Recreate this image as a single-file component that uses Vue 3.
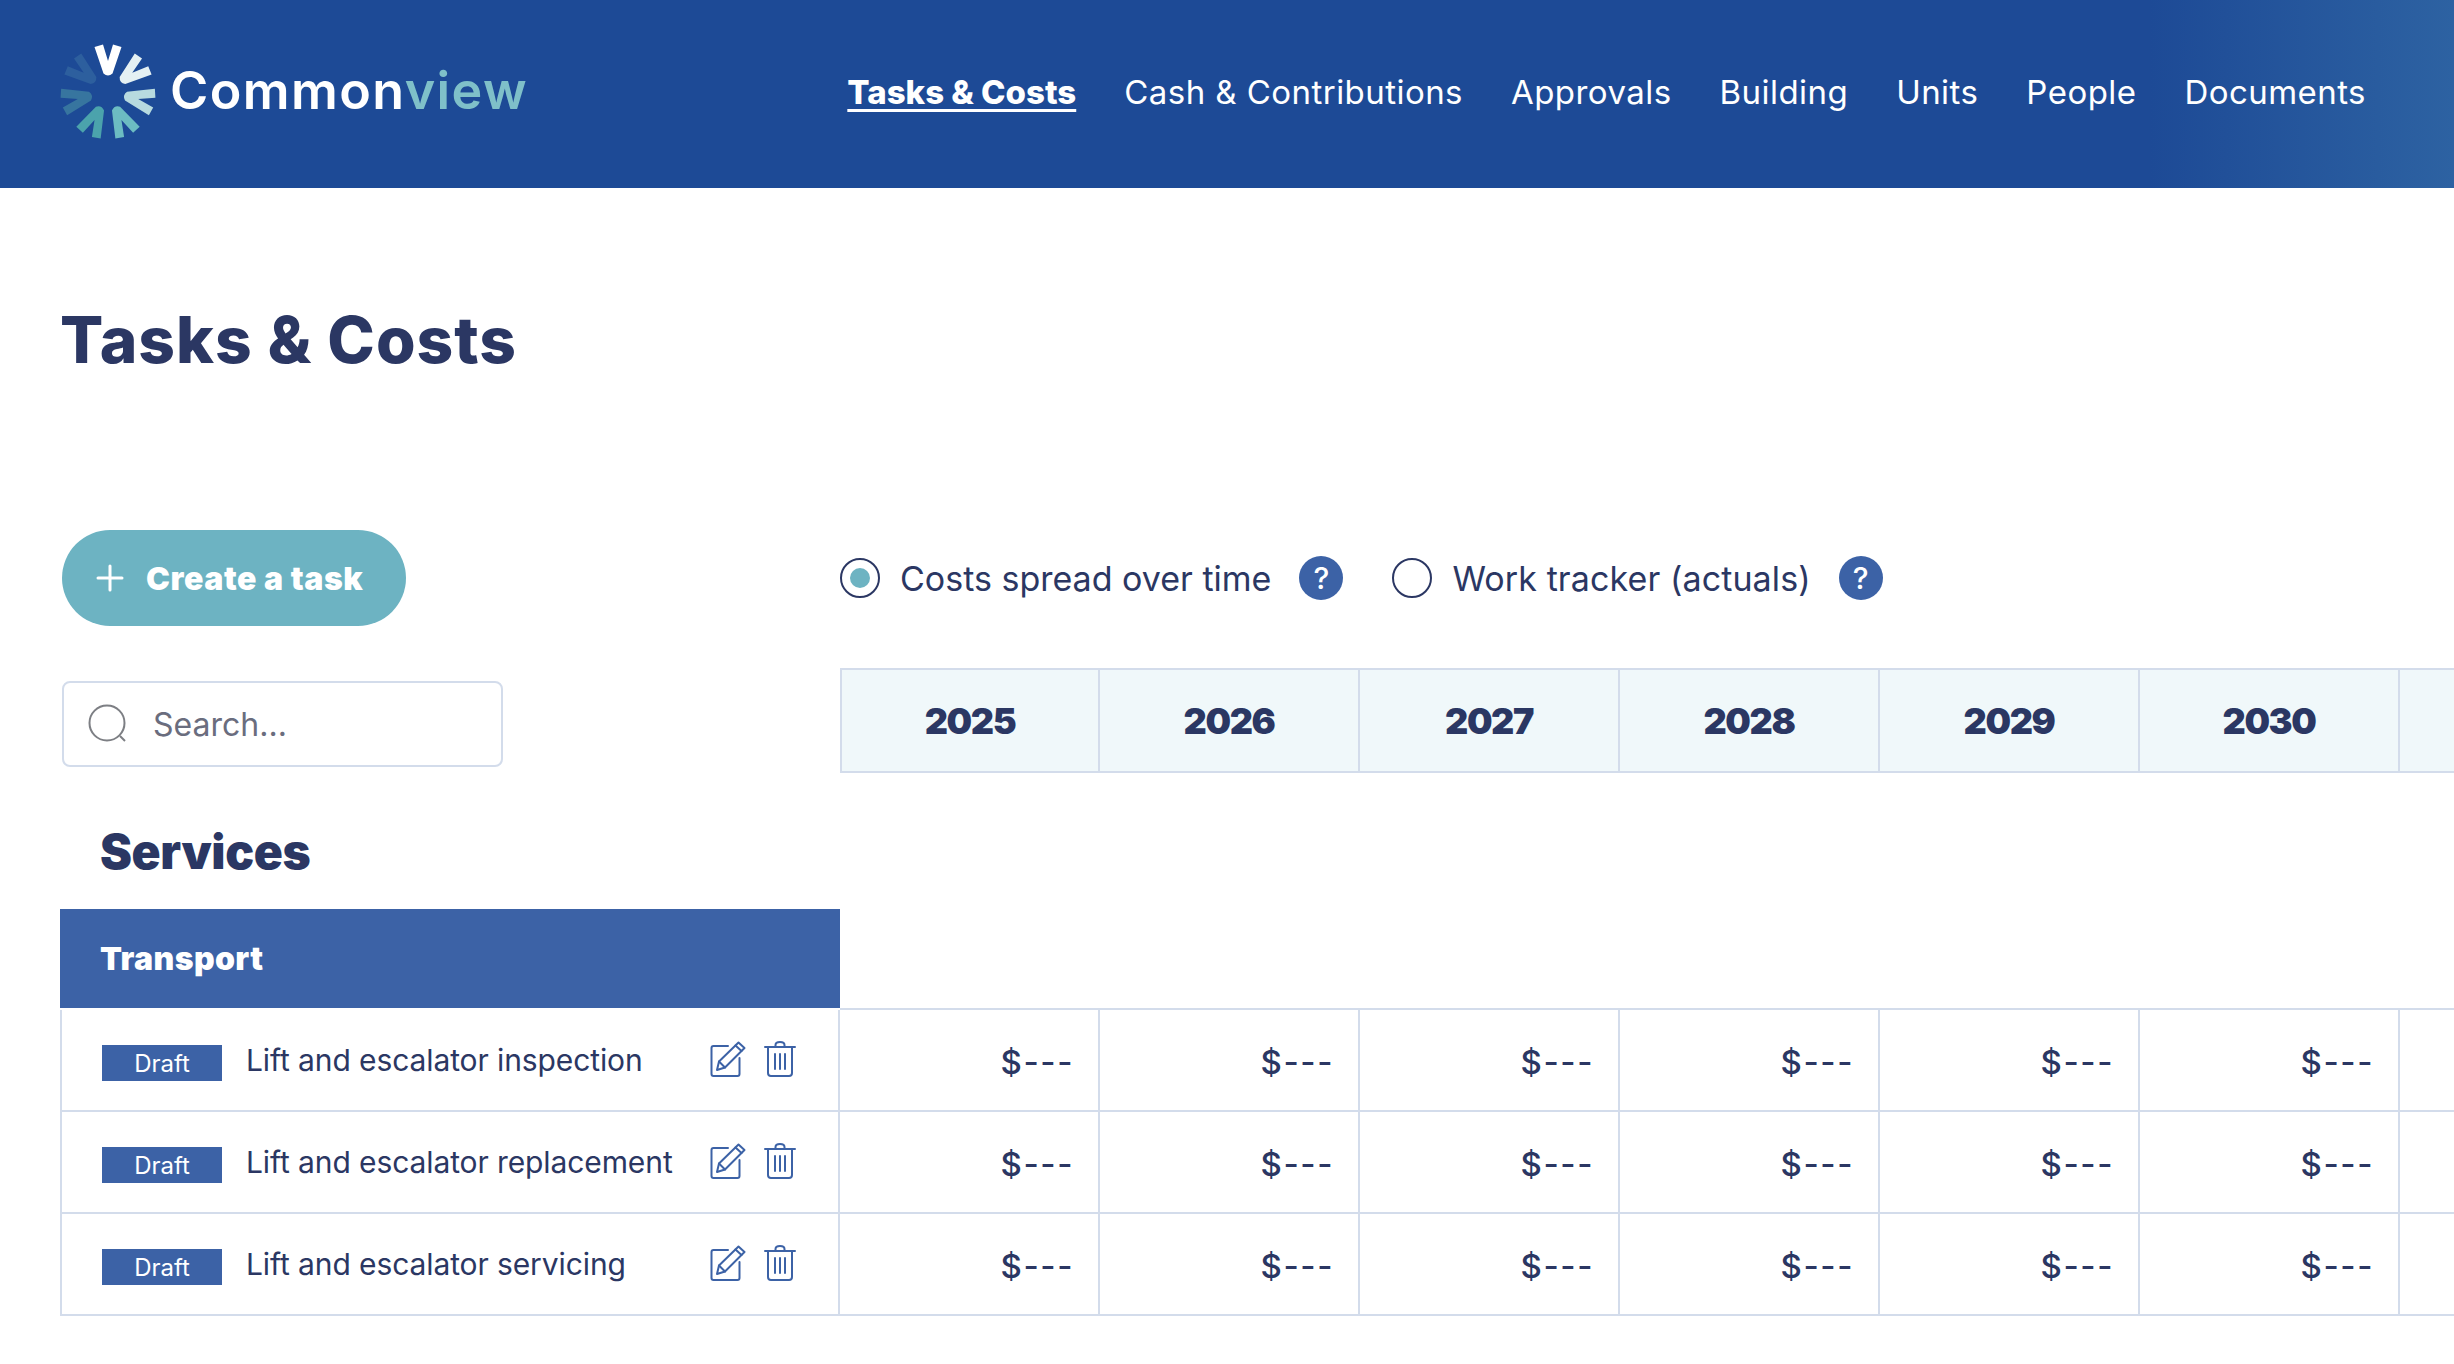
<script setup>
const navItems = ["Tasks & Costs", "Cash & Contributions", "Approvals", "Building", "Units", "People", "Documents"]
const years = [2025, 2026, 2027, 2028, 2029, 2030]
const tasks = ["Lift and escalator inspection", "Lift and escalator replacement", "Lift and escalator servicing"]
const petals = ["#ffffff", "#e4f0f3", "#b7dadf", "#6cbcc2", "#4ba3ac", "#37759f", "#2d5f9e"]
</script>

<template>
  <div class="page">
    <header class="topbar">
      <div class="brand">
        <svg class="logo" viewBox="-48 -48 96 96" width="96" height="96">
          <path
            v-for="(color, i) in petals"
            :key="i"
            :fill="color"
            :transform="`rotate(${(i * 360) / 7})`"
            d="M-13.5 -45 L-5 -47.5 L0 -31 L5 -47.5 L13.5 -45 L4.5 -18.5 Q0 -14.5 -4.5 -18.5 Z"
          />
        </svg>
        <span class="wordmark">Common<span class="wordmark-accent">view</span></span>
      </div>
      <nav class="nav">
        <a v-for="(item, i) in navItems" :key="item" class="nav-link" :class="{ active: i === 0 }">{{ item }}</a>
      </nav>
    </header>

    <main class="content">
      <h1 class="title">Tasks &amp; Costs</h1>

      <div class="row controls">
        <div class="side">
          <button class="create-btn">
            <svg width="28" height="28" viewBox="0 0 28 28">
              <path d="M14 2V26M2 14H26" stroke="#fff" stroke-width="3" stroke-linecap="round" />
            </svg>
            Create a task
          </button>
        </div>
        <div class="view-options">
          <label class="option">
            <span class="radio checked"></span>
            <span>Costs spread over time</span>
          </label>
          <span class="help">?</span>
          <label class="option second">
            <span class="radio"></span>
            <span>Work tracker (actuals)</span>
          </label>
          <span class="help">?</span>
        </div>
      </div>

      <div class="row years-row">
        <div class="side">
          <div class="search">
            <svg width="42" height="40" viewBox="0 0 42 40" fill="none" stroke="#7d7f84" stroke-width="2">
              <circle cx="19" cy="19" r="17.5" />
              <path d="M32 32L37 37" />
            </svg>
            <span>Search...</span>
          </div>
        </div>
        <div class="cells">
          <div v-for="year in years" :key="year" class="year">{{ year }}</div>
          <div class="year"></div>
        </div>
      </div>

      <h2 class="section-title">Services</h2>

      <div class="row group-row">
        <div class="group">Transport</div>
        <div class="group-rest"></div>
      </div>

      <div v-for="task in tasks" :key="task" class="row task-row">
        <div class="task">
          <span class="badge">Draft</span>
          <span class="task-name">{{ task }}</span>
          <svg class="edit" width="36" height="36" viewBox="0 0 36 36" fill="none" stroke="#3c62a6" stroke-width="2" stroke-linejoin="round" stroke-linecap="round">
            <path d="M18 5H3.5Q1.5 5 1.5 7V33Q1.5 35 3.5 35H27.5Q29.5 35 29.5 33V17" />
            <path d="M28.5 1.5L34.5 7L15 26.5L7 29L9 20.5Z" />
            <path d="M9 20.5L15 26.5M25.5 4.5L31.5 10" />
          </svg>
          <svg class="trash" width="32" height="36" viewBox="0 0 32 36" fill="none" stroke="#3c62a6" stroke-width="2" stroke-linejoin="round" stroke-linecap="round">
            <path d="M1 6H31" />
            <path d="M11.5 6V4Q11.5 1 16 1Q20.5 1 20.5 4V6" />
            <path d="M4 6V32Q4 35 7 35H25Q28 35 28 32V6" />
            <path d="M11 13V28M16 13V28M21 13V28" />
          </svg>
        </div>
        <div class="cells">
          <div v-for="year in years" :key="year" class="amount">$---</div>
          <div class="amount"></div>
        </div>
      </div>
    </main>
  </div>
</template>

<style scoped>
.page {
  width: 2454px;
  height: 1364px;
  overflow: hidden;
  font-family: Inter, "Liberation Sans", sans-serif;
  color: #2b3763;
  background: #fff;
}

.topbar {
  height: 188px;
  box-sizing: border-box;
  display: flex;
  align-items: center;
  justify-content: space-between;
  padding: 0 88px 0 60px;
  background: linear-gradient(90deg, #1d4a96 0, #1d4a96 2150px, #2d62a2 100%);
}

.brand {
  display: flex;
  align-items: center;
  gap: 14px;
  margin-bottom: 4px;
}

.logo {
  display: block;
}

.wordmark {
  margin-bottom: 4px;
  font-size: 52px;
  font-weight: 600;
  letter-spacing: 1.4px;
  color: #fff;
}

.wordmark-accent {
  color: #7fc0c9;
}

.nav {
  display: flex;
  gap: 48px;
  margin-bottom: 4px;
  font-size: 33px;
  letter-spacing: 0.45px;
  color: #fff;
}

.nav-link.active {
  font-weight: 800;
  letter-spacing: 0;
  text-decoration: underline;
  text-underline-offset: 5px;
}

.content {
  padding-left: 60px;
}

.title {
  margin: 0;
  padding-top: 112px;
  height: 230px;
  box-sizing: content-box;
  font-size: 64px;
  line-height: 80px;
  font-weight: 800;
  letter-spacing: 1px;
}

.row {
  display: flex;
}

.side {
  width: 780px;
  flex: none;
}

.controls {
  height: 138px;
}

.create-btn {
  width: 344px;
  height: 96px;
  margin-left: 2px;
  border: 0;
  border-radius: 48px;
  background: #6db3c2;
  color: #fff;
  font: 900 32px Inter, sans-serif;
  letter-spacing: 0.6px;
  display: flex;
  align-items: center;
  gap: 22px;
  padding: 0 0 0 34px;
}

.view-options {
  display: flex;
  align-items: center;
  height: 96px;
  font-size: 34px;
}

.option {
  display: flex;
  align-items: center;
  gap: 20px;
}

.option.second {
  margin-left: 49px;
  letter-spacing: 0.1px;
}

.radio {
  width: 40px;
  height: 40px;
  box-sizing: border-box;
  border: 2px solid #2b3763;
  border-radius: 50%;
  display: flex;
  align-items: center;
  justify-content: center;
}

.radio.checked::after {
  content: "";
  width: 20px;
  height: 20px;
  border-radius: 50%;
  background: #6db3c2;
}

.help {
  width: 44px;
  height: 44px;
  margin-left: 28px;
  border-radius: 50%;
  background: #3c62a6;
  color: #fff;
  font-size: 30px;
  font-weight: 500;
  display: flex;
  align-items: center;
  justify-content: center;
}

.search {
  width: 441px;
  height: 86px;
  margin: 13px 0 0 2px;
  box-sizing: border-box;
  border: 2px solid #d3dceb;
  border-radius: 8px;
  display: flex;
  align-items: center;
  gap: 23px;
  padding-left: 24px;
  font-size: 32px;
  color: #6a6d7e;
}

.cells {
  flex: 1;
  display: flex;
  min-width: 0;
}

.years-row {
  height: 105px;
}

.year {
  flex: none;
  width: 260px;
  box-sizing: border-box;
  border: 2px solid #d3dceb;
  border-left-width: 0;
  background: #f0f8fa;
  font-size: 36px;
  font-weight: 900;
  letter-spacing: -1.4px;
  display: flex;
  align-items: center;
  justify-content: center;
}

.year:first-child {
  border-left-width: 2px;
}

.section-title {
  margin: 0;
  height: 136px;
  box-sizing: border-box;
  padding: 48px 0 0 40px;
  font-size: 48px;
  line-height: 62px;
  font-weight: 900;
  letter-spacing: -0.4px;
}

.group-row {
  height: 101px;
}

.group {
  width: 780px;
  flex: none;
  height: 99px;
  box-sizing: border-box;
  background: #3c62a6;
  color: #fff;
  font-size: 32px;
  font-weight: 900;
  letter-spacing: 0.4px;
  display: flex;
  align-items: center;
  padding-left: 40px;
}

.group-rest {
  flex: 1;
  border-bottom: 2px solid #d3dceb;
}

.task-row {
  height: 102px;
}

.task {
  width: 780px;
  flex: none;
  box-sizing: border-box;
  border: 2px solid #d3dceb;
  border-top: 0;
  display: flex;
  align-items: center;
  padding-left: 40px;
  position: relative;
}

.badge {
  width: 120px;
  height: 36px;
  margin-top: 6px;
  background: #3c62a6;
  color: #fff;
  font-size: 24px;
  display: flex;
  align-items: center;
  justify-content: center;
}

.task-name {
  margin-left: 24px;
  margin-bottom: 1px;
  font-size: 30px;
  letter-spacing: -0.1px;
  white-space: nowrap;
}

.edit {
  position: absolute;
  left: 648px;
  top: 31px;
}

.trash {
  position: absolute;
  left: 702px;
  top: 31px;
}

.amount {
  flex: none;
  width: 260px;
  box-sizing: border-box;
  border-right: 2px solid #d3dceb;
  border-bottom: 2px solid #d3dceb;
  display: flex;
  align-items: center;
  justify-content: flex-end;
  padding: 4px 24px 0 0;
  font-size: 33px;
  font-weight: 500;
  letter-spacing: 1.6px;
}
</style>

<style>
body {
  overflow: hidden;
}
</style>
